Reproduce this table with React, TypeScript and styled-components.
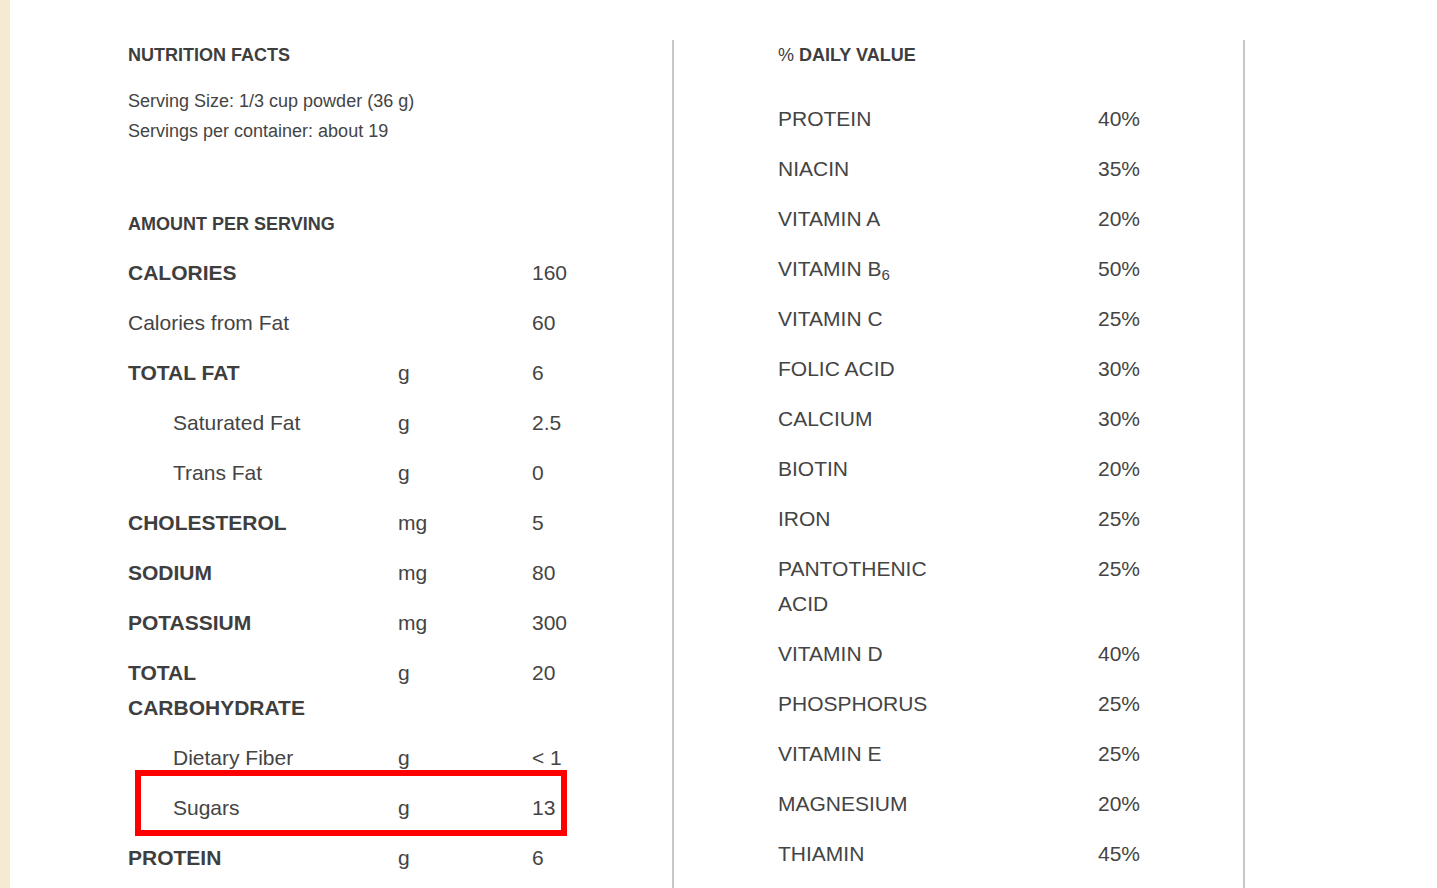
import React from "react";
import styled, { createGlobalStyle } from "styled-components";

interface Nutrient {
  label: string;
  unit?: string;
  value: string;
  bold?: boolean;
  sub?: boolean;
  marked?: boolean;
}

interface Daily {
  label: string;
  subscript?: string;
  percent: string;
}

const nutrients: Nutrient[] = [
  { label: "CALORIES", value: "160", bold: true },
  { label: "Calories from Fat", value: "60" },
  { label: "TOTAL FAT", unit: "g", value: "6", bold: true },
  { label: "Saturated Fat", unit: "g", value: "2.5", sub: true },
  { label: "Trans Fat", unit: "g", value: "0", sub: true },
  { label: "CHOLESTEROL", unit: "mg", value: "5", bold: true },
  { label: "SODIUM", unit: "mg", value: "80", bold: true },
  { label: "POTASSIUM", unit: "mg", value: "300", bold: true },
  { label: "TOTAL CARBOHYDRATE", unit: "g", value: "20", bold: true },
  { label: "Dietary Fiber", unit: "g", value: "< 1", sub: true },
  { label: "Sugars", unit: "g", value: "13", sub: true, marked: true },
  { label: "PROTEIN", unit: "g", value: "6", bold: true },
];

const dailyValues: Daily[] = [
  { label: "PROTEIN", percent: "40%" },
  { label: "NIACIN", percent: "35%" },
  { label: "VITAMIN A", percent: "20%" },
  { label: "VITAMIN B", subscript: "6", percent: "50%" },
  { label: "VITAMIN C", percent: "25%" },
  { label: "FOLIC ACID", percent: "30%" },
  { label: "CALCIUM", percent: "30%" },
  { label: "BIOTIN", percent: "20%" },
  { label: "IRON", percent: "25%" },
  { label: "PANTOTHENIC ACID", percent: "25%" },
  { label: "VITAMIN D", percent: "40%" },
  { label: "PHOSPHORUS", percent: "25%" },
  { label: "VITAMIN E", percent: "25%" },
  { label: "MAGNESIUM", percent: "20%" },
  { label: "THIAMIN", percent: "45%" },
];

const App = () => {
  return (
    <>
      <GlobalStyle />
      <Page>
        <SideStrip />
        <FactsColumn>
          <Heading>NUTRITION FACTS</Heading>
          <ServingInfo>
            <p>Serving Size: 1/3 cup powder (36 g)</p>
            <p>Servings per container: about 19</p>
          </ServingInfo>
          <Heading $spaced>AMOUNT PER SERVING</Heading>
          {nutrients.map((n) => (
            <FactRow key={n.label} $marked={n.marked}>
              <FactLabel $bold={n.bold} $sub={n.sub}>
                {n.label}
              </FactLabel>
              <span>{n.unit}</span>
              <span>{n.value}</span>
            </FactRow>
          ))}
        </FactsColumn>
        <DailyColumn>
          <Heading>
            <Percent>%</Percent> DAILY VALUE
          </Heading>
          <DailyList>
            {dailyValues.map((d) => (
              <DailyRow key={d.label}>
                <DailyLabel>
                  {d.label}
                  {d.subscript && <Sub>{d.subscript}</Sub>}
                </DailyLabel>
                <span>{d.percent}</span>
              </DailyRow>
            ))}
          </DailyList>
        </DailyColumn>
      </Page>
    </>
  );
};

const GlobalStyle = createGlobalStyle`
  html, body {
    margin: 0;
    overflow: hidden;
    background: #fff;
  }
  body {
    font-family: "Liberation Sans", Arial, sans-serif;
    color: #444;
  }
`;

const Page = styled.div`
  display: flex;
  min-height: 100vh;
`;

const SideStrip = styled.div`
  width: 10px;
  flex-shrink: 0;
  background: #f4ebd2;
`;

const FactsColumn = styled.section`
  width: 664px;
  flex-shrink: 0;
  box-sizing: border-box;
  margin-top: 40px;
  padding-left: 118px;
  border-right: 2px solid #c8c8c8;
`;

const DailyColumn = styled.section`
  width: 571px;
  flex-shrink: 0;
  box-sizing: border-box;
  margin-top: 40px;
  padding-left: 104px;
  border-right: 2px solid #c8c8c8;
`;

const Heading = styled.h2<{ $spaced?: boolean }>`
  margin: ${({ $spaced }) => ($spaced ? "63px 0 17px" : "0")};
  padding-top: 1px;
  font-size: 18px;
  line-height: 28px;
  font-weight: bold;
  color: #3e3e3e;
`;

const Percent = styled.span`
  font-weight: normal;
`;

const ServingInfo = styled.div`
  margin-top: 17px;
  font-size: 18px;
  line-height: 30px;

  p {
    margin: 0;
  }
`;

const FactRow = styled.div<{ $marked?: boolean }>`
  position: relative;
  display: grid;
  grid-template-columns: 270px 134px 1fr;
  padding-bottom: 15px;
  font-size: 21px;
  line-height: 35px;

  ${({ $marked }) =>
    $marked &&
    `
    &::after {
      content: "";
      position: absolute;
      left: 7px;
      top: -20px;
      width: 432px;
      height: 66px;
      box-sizing: border-box;
      border: 6px solid #ff0000;
    }
  `}
`;

const FactLabel = styled.span<{ $bold?: boolean; $sub?: boolean }>`
  font-weight: ${({ $bold }) => ($bold ? "bold" : "normal")};
  padding-left: ${({ $sub }) => ($sub ? "45px" : "0")};
  color: ${({ $bold }) => ($bold ? "#3e3e3e" : "#444")};
  padding-right: 90px;
`;

const DailyList = styled.div`
  margin-top: 32px;
`;

const DailyRow = styled.div`
  display: grid;
  grid-template-columns: 320px 1fr;
  padding-bottom: 15px;
  font-size: 21px;
  line-height: 35px;
`;

const DailyLabel = styled.span`
  padding-right: 150px;
`;

const Sub = styled.sub`
  font-size: 15px;
  vertical-align: -4px;
  line-height: 0;
`;

export default App;
